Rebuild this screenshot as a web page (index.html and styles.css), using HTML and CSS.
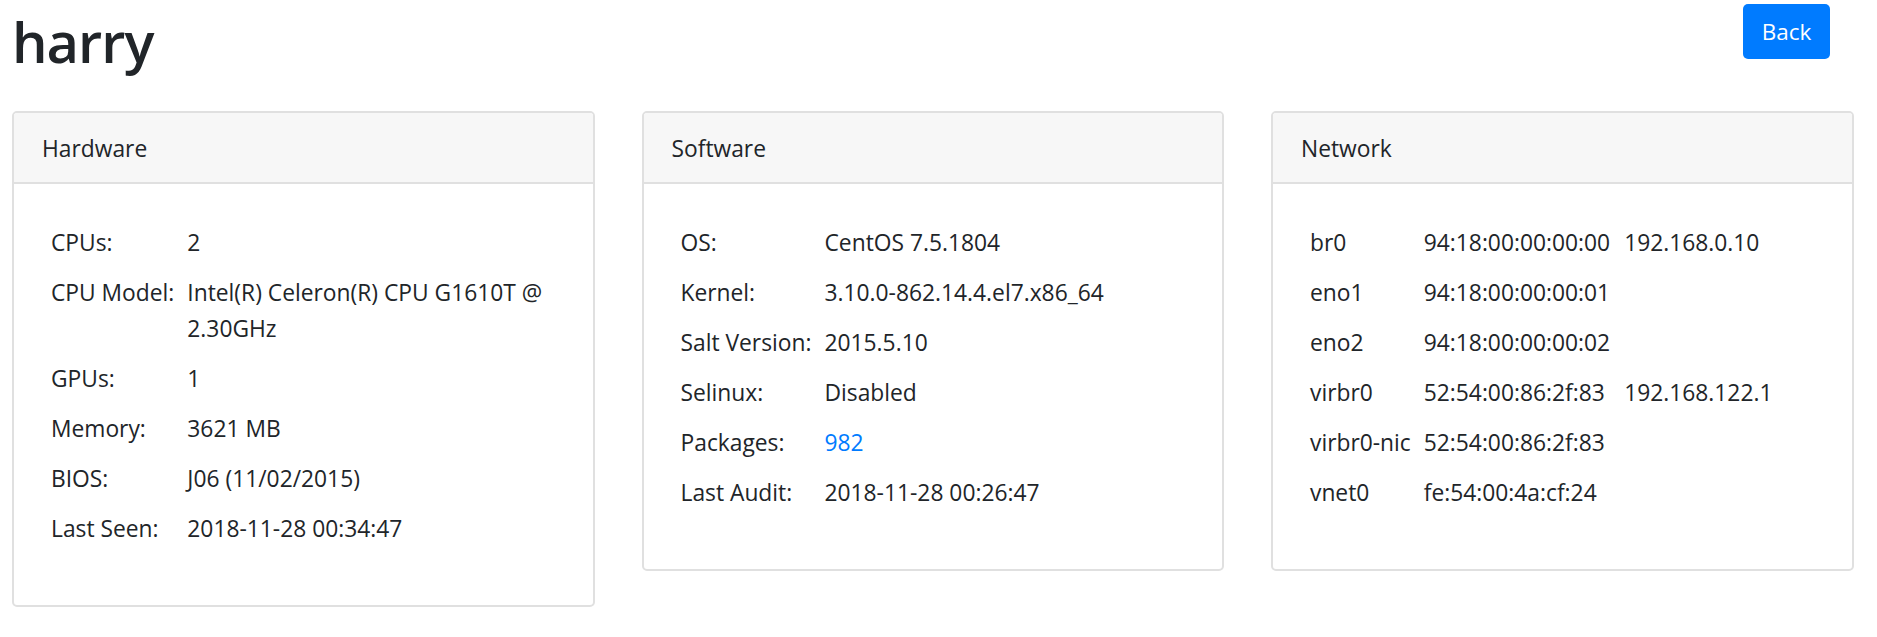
FILE: index.html
```html
<!DOCTYPE html>
<html>
<head>
<meta charset="utf-8">
<link rel="stylesheet" href="styles.css">
</head>
<body>
<div class="page">
  <div class="topbar">
    <h1 class="title">harry</h1>
    <a class="btn" href="#">Back</a>
  </div>
  <div class="cards">
    <div class="card">
      <div class="card-header">Hardware</div>
      <div class="card-body">
        <table class="info">
          <tr><td class="k">CPUs:</td><td>2</td></tr>
          <tr><td class="k">CPU Model:</td><td>Intel(R) Celeron(R) CPU G1610T @ 2.30GHz</td></tr>
          <tr><td class="k">GPUs:</td><td>1</td></tr>
          <tr><td class="k">Memory:</td><td>3621 MB</td></tr>
          <tr><td class="k">BIOS:</td><td>J06 (11/02/2015)</td></tr>
          <tr><td class="k">Last Seen:</td><td>2018-11-28 00:34:47</td></tr>
        </table>
      </div>
    </div>
    <div class="card">
      <div class="card-header">Software</div>
      <div class="card-body">
        <table class="info">
          <tr><td class="k">OS:</td><td>CentOS 7.5.1804</td></tr>
          <tr><td class="k">Kernel:</td><td>3.10.0-862.14.4.el7.x86_64</td></tr>
          <tr><td class="k">Salt Version:</td><td>2015.5.10</td></tr>
          <tr><td class="k">Selinux:</td><td>Disabled</td></tr>
          <tr><td class="k">Packages:</td><td><a class="link" href="#">982</a></td></tr>
          <tr><td class="k">Last Audit:</td><td>2018-11-28 00:26:47</td></tr>
        </table>
      </div>
    </div>
    <div class="card">
      <div class="card-header">Network</div>
      <div class="card-body">
        <table class="info net">
          <tr><td class="k">br0</td><td>94:18:00:00:00:00</td><td>192.168.0.10</td></tr>
          <tr><td class="k">eno1</td><td>94:18:00:00:00:01</td><td></td></tr>
          <tr><td class="k">eno2</td><td>94:18:00:00:00:02</td><td></td></tr>
          <tr><td class="k">virbr0</td><td>52:54:00:86:2f:83</td><td>192.168.122.1</td></tr>
          <tr><td class="k">virbr0-nic</td><td>52:54:00:86:2f:83</td><td></td></tr>
          <tr><td class="k">vnet0</td><td>fe:54:00:4a:cf:24</td><td></td></tr>
        </table>
      </div>
    </div>
  </div>
</div>
</body>
</html>
```

FILE: styles.css
```css
html, body {
  margin: 0;
  padding: 0;
  background: #fff;
}
body {
  font-family: "Open Sans", "Noto Sans", sans-serif;
  font-size: 22.8px;
  color: #212529;
}
.page {
  padding: 0 0 0 12px;
}
.topbar {
  display: flex;
  justify-content: space-between;
  align-items: flex-start;
  height: 111px;
  padding-right: 47px;
}
.title {
  margin: 6px 0 0 0;
  font-size: 56px;
  font-weight: 600;
  line-height: 70px;
  letter-spacing: -1px;
}
.btn {
  display: inline-block;
  margin-top: 4px;
  width: 87px;
  height: 55px;
  line-height: 55px;
  text-align: center;
  background: #007bff;
  color: #fff;
  border-radius: 5px;
  text-decoration: none;
  font-size: 22.5px;
}
.cards {
  display: grid;
  grid-template-columns: repeat(3, 582.5px);
  column-gap: 47px;
  align-items: start;
}
.card {
  border: 2px solid #e0e0e0;
  border-radius: 5px;
  overflow: hidden;
}
.card-header {
  background: #f7f7f7;
  border-bottom: 2px solid #e0e0e0;
  height: 71px;
  line-height: 71px;
  padding: 0 28px;
  box-sizing: border-box;
}
.card-body {
  padding: 34px 30px 51px 30px;
}
.info {
  width: 100%;
  border-collapse: collapse;
}
.info td {
  padding: 7px 7px;
  line-height: 36px;
  vertical-align: top;
}
.info td.k {
  white-space: nowrap;
  width: 1px;
}
.info td.k + td {
  padding-left: 6px;
}
.net td {
  white-space: nowrap;
  width: 1px;
}
.net td:last-child {
  width: auto;
}
.link {
  color: #007bff;
  text-decoration: none;
}
```
